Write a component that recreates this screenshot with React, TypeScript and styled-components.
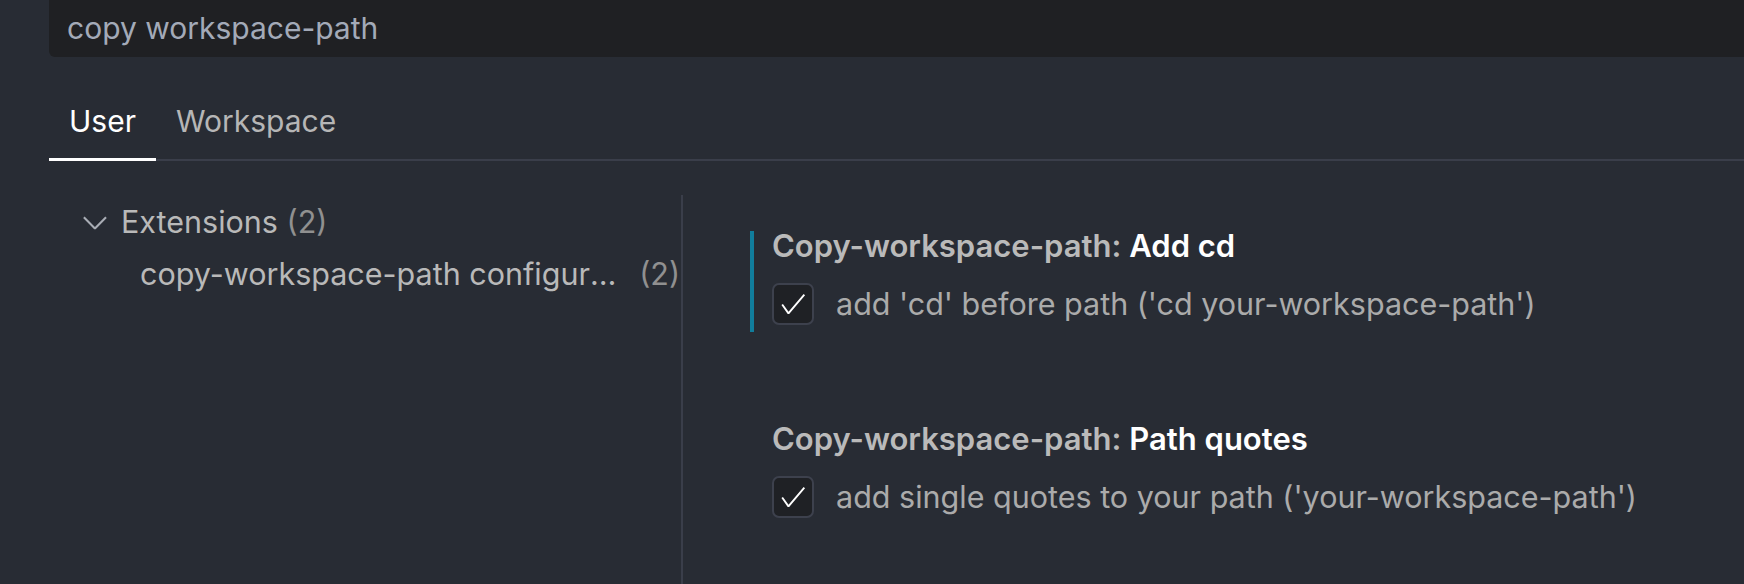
import React from "react";
import styled, { createGlobalStyle } from "styled-components";

const GlobalStyle = createGlobalStyle`
  html, body {
    margin: 0;
    padding: 0;
    background: #282c34;
  }
  * {
    box-sizing: border-box;
  }
`;

type TreeItem = {
  label: string;
  count: number;
  depth: number;
  expanded?: boolean;
};

type Setting = {
  category: string;
  name: string;
  description: string;
  checked: boolean;
  focused?: boolean;
};

const tree: TreeItem[] = [
  { label: "Extensions", count: 2, depth: 0, expanded: true },
  { label: "copy-workspace-path configuration", count: 2, depth: 1 },
];

const settings: Setting[] = [
  {
    category: "Copy-workspace-path:",
    name: "Add cd",
    description: "add 'cd' before path ('cd your-workspace-path')",
    checked: true,
    focused: true,
  },
  {
    category: "Copy-workspace-path:",
    name: "Path quotes",
    description: "add single quotes to your path ('your-workspace-path')",
    checked: true,
  },
];

// codicon chevron-down
const Chevron = () => (
  <svg width="38" height="38" viewBox="0 0 16 16" fill="#a9adb5">
    <path d="M7.976 10.072l4.357-4.357.62.618L8.284 11h-.618L3 6.333l.619-.618 4.357 4.357z" />
  </svg>
);

// codicon check
const CheckIcon = () => (
  <svg width="30" height="30" viewBox="0 0 16 16" fill="#ffffff">
    <path d="M14.431 3.323l-8.47 10-.79-.036-3.35-4.77.818-.574 2.978 4.24 8.051-9.506.764.646z" />
  </svg>
);

export default function App() {
  return (
    <>
      <GlobalStyle />
      <Page>
        <SearchBox>copy workspace-path</SearchBox>
        <TabBar>
          <Tab active>User</Tab>
          <Tab>Workspace</Tab>
        </TabBar>
        <Body>
          <Sidebar>
            {tree.map((item) => (
              <TreeRow key={item.label} depth={item.depth}>
                {item.expanded !== undefined && (
                  <Twistie>
                    <Chevron />
                  </Twistie>
                )}
                <TreeLabel>
                  {item.label}
                  {item.depth === 0 && <Count> ({item.count})</Count>}
                </TreeLabel>
                {item.depth > 0 && <SideCount>({item.count})</SideCount>}
              </TreeRow>
            ))}
          </Sidebar>
          <SettingsList>
            {settings.map((s) => (
              <SettingItem key={s.name} focused={!!s.focused}>
                <SettingTitle>
                  <Category>{s.category}</Category> <Key>{s.name}</Key>
                </SettingTitle>
                <CheckRow>
                  <Checkbox>{s.checked && <CheckIcon />}</Checkbox>
                  <Description>{s.description}</Description>
                </CheckRow>
              </SettingItem>
            ))}
          </SettingsList>
        </Body>
      </Page>
    </>
  );
}

const Page = styled.div`
  width: 1744px;
  height: 584px;
  overflow: hidden;
  background: #282c34;
  padding-left: 49px;
  display: flex;
  flex-direction: column;
  font-family: "Inter", "Noto Sans", sans-serif;
`;

const SearchBox = styled.div`
  height: 57px;
  flex-shrink: 0;
  background: #1f2023;
  border-bottom-left-radius: 6px;
  display: flex;
  align-items: center;
  padding-left: 18px;
  padding-bottom: 2px;
  font-size: 30px;
  color: #a3aab8;
`;

const TabBar = styled.div`
  height: 104px;
  flex-shrink: 0;
  display: flex;
  align-items: flex-end;
  border-bottom: 2px solid #3a3e4a;
`;

const Tab = styled.div<{ active?: boolean }>`
  padding: 0 20px 19px;
  margin-bottom: -2px;
  font-size: 30px;
  line-height: 36px;
  color: ${({ active }) => (active ? "#ffffff" : "#b6b6b6")};
  border-bottom: 3px solid ${({ active }) => (active ? "#ffffff" : "transparent")};
`;

const Body = styled.div`
  flex: 1;
  display: flex;
  margin-top: 34px;
  min-height: 0;
`;

const Sidebar = styled.div`
  width: 634px;
  flex-shrink: 0;
  border-right: 2px solid #3a3e4a;
`;

const TreeRow = styled.div<{ depth: number }>`
  height: 52px;
  display: flex;
  align-items: center;
  padding-left: ${({ depth }) => (depth === 0 ? 28 : 91)}px;
  padding-right: 1px;
  font-size: 30.5px;
  color: #b9b9b9;
  white-space: nowrap;
`;

const Twistie = styled.span`
  width: 45px;
  flex-shrink: 0;
  display: flex;
  align-items: center;
  margin-left: -1px;
  padding-top: 2px;
`;

const TreeLabel = styled.span`
  flex: 1;
  min-width: 0;
  overflow: hidden;
  text-overflow: ellipsis;
`;

const Count = styled.span`
  color: #909090;
`;

const SideCount = styled.span`
  flex-shrink: 0;
  margin-left: 14px;
  color: #909090;
`;

const SettingsList = styled.div`
  flex: 1;
  padding: 36px 0 0 67px;
`;

const SettingItem = styled.div<{ focused: boolean }>`
  border-left: 4px solid ${({ focused }) => (focused ? "#117d9c" : "transparent")};
  padding: 0 0 7px 18px;
  margin-bottom: 92px;
`;

const SettingTitle = styled.div`
  font-size: 31px;
  line-height: 30px;
  font-weight: 600;
  white-space: nowrap;
`;

const Category = styled.span`
  color: #bababa;
`;

const Key = styled.span`
  color: #ffffff;
`;

const CheckRow = styled.div`
  margin-top: 22px;
  display: flex;
  align-items: center;
  gap: 22px;
`;

const Checkbox = styled.div`
  width: 42px;
  height: 42px;
  border-radius: 7px;
  border: 2px solid #3d414d;
  background: #1f2125;
  display: flex;
  align-items: center;
  justify-content: center;
  flex-shrink: 0;
`;

const Description = styled.div`
  font-size: 30.5px;
  line-height: 36px;
  color: #ababab;
  white-space: nowrap;
`;
